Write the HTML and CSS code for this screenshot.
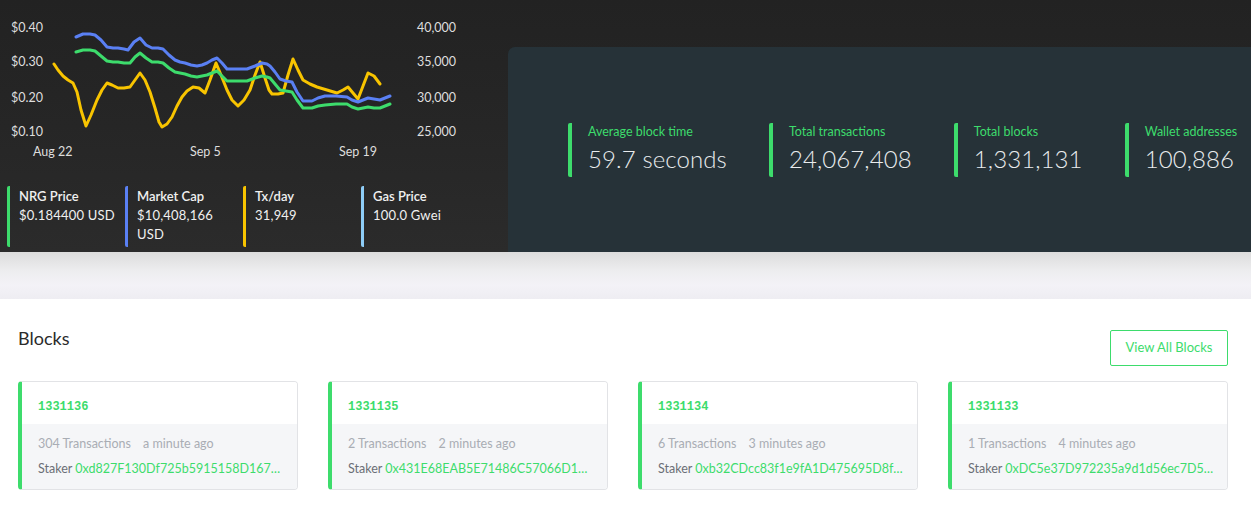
FILE: index.html
```html
<!DOCTYPE html>
<html>
<head>
<meta charset="utf-8">
<link rel="stylesheet" href="styles.css">
</head>
<body>
<header class="top">
  <div class="chart-col">
    <svg class="chart" width="470" height="170" viewBox="0 0 470 170">
      <g class="axis">
        <text x="11" y="32">$0.40</text>
        <text x="11" y="66">$0.30</text>
        <text x="11" y="102">$0.20</text>
        <text x="11" y="136">$0.10</text>
        <text x="417" y="32">40,000</text>
        <text x="417" y="66">35,000</text>
        <text x="417" y="102">30,000</text>
        <text x="417" y="136">25,000</text>
        <text x="33" y="156">Aug 22</text>
        <text x="190" y="156">Sep 5</text>
        <text x="339" y="156">Sep 19</text>
      </g>
      <polyline class="ln yellow" points="54,64 58,70 63,76 68,80 73,83 77,92 81,110 86,126 91,115 97,100 102,90 107,83 112,85 118,88 124,88 130,87 135,80 140,73 145,80 150,92 155,108 159,122 162,127 167,124 172,117 177,106 182,97 187,91 193,87 199,88 205,93 210,80 216,63 221,75 227,90 232,100 238,106 244,100 250,90 255,75 260,62 265,78 269,90 272,94 278,94 283,93 288,75 293,59 298,70 303,80 310,84 317,87 327,90 337,93 343,90 348,87 353,93 358,99 363,86 368,73 374,76 380,84"/>
      <polyline class="ln blue" points="76,37 83,34 90,34 95,35 101,40 107,47 113,48 118,48 124,49 128,50 134,42 140,38 146,45 152,48 158,48 163,49 169,55 175,60 180,62 185,63 191,65 197,66 202,65 207,63 212,60 217,58 222,63 227,69 237,69 247,69 255,66 262,63 267,64 270,66 275,72 280,79 286,81 292,82 297,92 303,101 308,101 312,101 318,98 325,96 336,96 347,97 352,100 358,102 363,100 368,98 374,99 380,100 385,98 390,96"/>
      <polyline class="ln green" points="76,52 83,50 90,50 95,51 101,56 107,61 113,62 118,62 124,63 130,63 135,57 140,53 146,58 152,62 158,62 163,63 169,68 175,72 180,73 185,74 191,76 197,77 202,76 207,75 212,73 217,71 222,76 227,81 237,81 247,81 255,78 262,76 267,77 270,78 275,84 280,90 286,91 292,92 297,100 303,108 308,108 312,108 318,106 325,105 336,104 347,104 352,107 358,109 363,108 368,107 374,108 380,108 385,106 390,104"/>
    </svg>
    <div class="legend">
      <div class="legend-item c-green">
        <div class="legend-title">NRG Price</div>
        <div class="legend-value">$0.184400 USD</div>
      </div>
      <div class="legend-item c-blue">
        <div class="legend-title">Market Cap</div>
        <div class="legend-value">$10,408,166 USD</div>
      </div>
      <div class="legend-item c-yellow">
        <div class="legend-title">Tx/day</div>
        <div class="legend-value">31,949</div>
      </div>
      <div class="legend-item c-sky">
        <div class="legend-title">Gas Price</div>
        <div class="legend-value">100.0 Gwei</div>
      </div>
    </div>
  </div>
  <div class="stats">
    <div class="stat">
      <div class="stat-label">Average block time</div>
      <div class="stat-value">59.7 seconds</div>
    </div>
    <div class="stat">
      <div class="stat-label">Total transactions</div>
      <div class="stat-value">24,067,408</div>
    </div>
    <div class="stat">
      <div class="stat-label">Total blocks</div>
      <div class="stat-value">1,331,131</div>
    </div>
    <div class="stat">
      <div class="stat-label">Wallet addresses</div>
      <div class="stat-value">100,886</div>
    </div>
  </div>
</header>
<div class="band"></div>
<main class="blocks">
  <div class="blocks-head">
    <h2 class="blocks-title">Blocks</h2>
    <a class="btn-outline">View All Blocks</a>
  </div>
  <div class="cards">
    <div class="card">
      <div class="card-top"><span class="block-num">1331136</span></div>
      <div class="card-body">
        <div class="meta"><span>304 Transactions</span><span>a minute ago</span></div>
        <div class="staker">Staker <span class="hash">0xd827F130Df725b5915158D167…</span></div>
      </div>
    </div>
    <div class="card">
      <div class="card-top"><span class="block-num">1331135</span></div>
      <div class="card-body">
        <div class="meta"><span>2 Transactions</span><span>2 minutes ago</span></div>
        <div class="staker">Staker <span class="hash">0x431E68EAB5E71486C57066D1…</span></div>
      </div>
    </div>
    <div class="card">
      <div class="card-top"><span class="block-num">1331134</span></div>
      <div class="card-body">
        <div class="meta"><span>6 Transactions</span><span>3 minutes ago</span></div>
        <div class="staker">Staker <span class="hash">0xb32CDcc83f1e9fA1D475695D8f…</span></div>
      </div>
    </div>
    <div class="card">
      <div class="card-top"><span class="block-num">1331133</span></div>
      <div class="card-body">
        <div class="meta"><span>1 Transactions</span><span>4 minutes ago</span></div>
        <div class="staker">Staker <span class="hash">0xDC5e37D972235a9d1d56ec7D5…</span></div>
      </div>
    </div>
  </div>
</main>
</body>
</html>
```
FILE: styles.css
```css
* { box-sizing: border-box; }
html, body { margin: 0; padding: 0; }
body {
  background: #ffffff;
  font-family: Lato, "Open Sans", sans-serif;
  width: 1251px;
  overflow: hidden;
}

.top {
  display: flex;
  height: 252px;
  background: linear-gradient(180deg, #222222 0%, #262626 50%, #2b2b2b 100%);
}

.chart-col {
  width: 508px;
  flex: none;
}
.chart { display: block; }
.axis text {
  fill: #dedede;
  font-family: Lato, "Open Sans", sans-serif;
  font-size: 12.5px;
}
.ln {
  fill: none;
  stroke-width: 3;
  stroke-linejoin: round;
  stroke-linecap: round;
}
.ln.yellow { stroke: #f8c400; }
.ln.blue { stroke: #5a80f4; }
.ln.green { stroke: #3ddc6c; }

.legend {
  display: flex;
  padding: 16px 0 0 7px;
}
.legend-item {
  width: 118px;
  height: 61px;
  padding-left: 9px;
  border-left: 3px solid #3ddc6c;
  border-radius: 2px;
  color: #f0f0f0;
  font-size: 13px;
  line-height: 19px;
}
.legend-item .legend-title { font-weight: 600; margin-top: 1px; }
.legend-item .legend-value { max-width: 96px; letter-spacing: 0.2px; }
.c-green { border-left-color: #3ddc6c; }
.c-blue { border-left-color: #5a80f4; }
.c-yellow { border-left-color: #f8c400; }
.c-sky { border-left-color: #8ecdf7; }

.stats {
  flex: 1;
  margin-top: 47px;
  background: #263238;
  border-top-left-radius: 7px;
  display: flex;
  align-items: center;
  gap: 42px;
  padding-left: 60px;
}
.stat {
  border-left: 4px solid #3ddc6c;
  border-radius: 2px;
  padding-left: 16px;
  height: 54px;
  white-space: nowrap;
}
.stat-label {
  color: #3ddc6c;
  font-size: 12.5px;
  line-height: 16px;
  margin-top: 1px;
}
.stat-value {
  color: #e9ecee;
  font-size: 24px;
  font-weight: 300;
  line-height: 37px;
  letter-spacing: 0.1px;
}

.band {
  height: 47px;
  background: linear-gradient(180deg, #dcdcdc 0%, #ededef 40%, #f3f2f7 70%, #eeedf2 100%);
}

.blocks {
  padding: 31px 23px 0 18px;
}
.blocks-head {
  display: flex;
  justify-content: space-between;
  align-items: flex-start;
}
.blocks-title {
  margin: -4px 0 0 0;
  font-size: 18px;
  font-weight: 400;
  line-height: 24px;
  color: #2b2b2b;
}
.btn-outline {
  display: block;
  width: 118px;
  height: 36px;
  border: 1px solid #3ddc6c;
  border-radius: 2px;
  color: #3ddc6c;
  font-size: 13px;
  line-height: 33px;
  text-align: center;
}

.cards {
  display: flex;
  gap: 30px;
  margin-top: 15px;
}
.card {
  width: 280px;
  height: 109px;
  border: 1px solid #e2e3e6;
  border-left: 4px solid #3ddc6c;
  border-radius: 4px;
  overflow: hidden;
}
.card-top {
  height: 42px;
  background: #ffffff;
  padding: 14px 0 0 16px;
  line-height: 16px;
}
.block-num {
  font-family: "Liberation Mono", monospace;
  font-weight: 700;
  font-size: 12px;
  color: #3ddc6c;
}
.card-body {
  height: 65px;
  background: #f5f6f8;
  padding: 11px 16px 0 16px;
  font-size: 12.5px;
  line-height: 17px;
}
.meta {
  color: #a9adb4;
  display: flex;
  gap: 12px;
}
.staker {
  margin-top: 8px;
  color: #6b6f76;
  white-space: nowrap;
}
.hash { color: #3ddc6c; }
```
